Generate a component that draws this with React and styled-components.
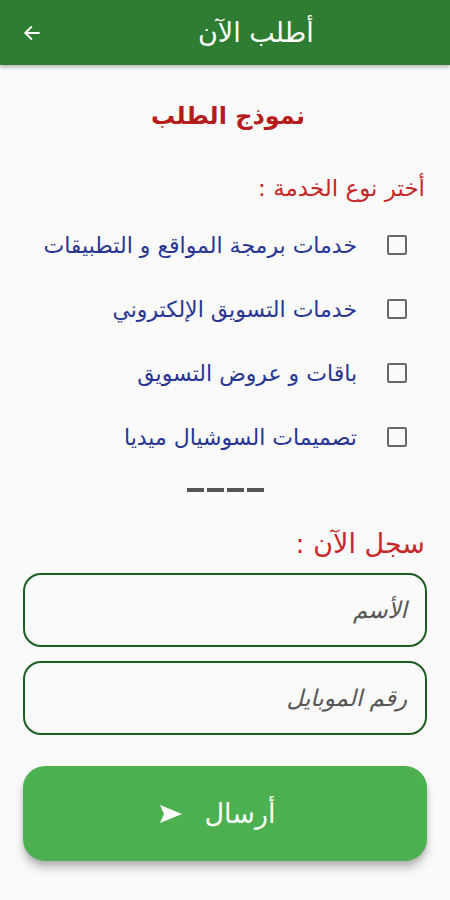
import styled, { createGlobalStyle } from "styled-components";

const GlobalStyle = createGlobalStyle`
  html, body {
    margin: 0;
    padding: 0;
    background: #fafafa;
    font-family: "DejaVu Sans", "Noto Sans", sans-serif;
  }
`;

const Page = styled.div`
  width: 450px;
  min-height: 900px;
  background: #fafafa;
  display: flex;
  flex-direction: column;
`;

const Header = styled.header`
  height: 65px;
  background: #2e7d32;
  box-shadow: 0 2px 4px rgba(0, 0, 0, 0.3);
  display: flex;
  align-items: center;
  padding: 0 0 0 20px;
  color: #fff;
`;

const BackButton = styled.div`
  width: 24px;
  height: 24px;
  display: flex;
  align-items: center;
  justify-content: center;
`;

const HeaderTitle = styled.h1`
  margin: 0 0 0 154px;
  font-size: 27px;
  font-weight: 400;
  direction: rtl;
`;

const Body = styled.main`
  direction: rtl;
  padding: 0 23px;
  display: flex;
  flex-direction: column;
`;

const FormTitle = styled.h2`
  margin: 37px 0 0 0;
  text-align: center;
  color: #b71c1c;
  font-size: 24px;
  font-weight: 700;
  padding-left: 6px;
`;

const SectionLabel = styled.div`
  color: #c62828;
  font-size: ${(p) => p.size}px;
  margin-top: ${(p) => p.top}px;
  padding-right: 2px;
`;

const List = styled.div`
  display: flex;
  flex-direction: column;
  margin-top: 12px;
`;

const Option = styled.label`
  height: 64px;
  display: flex;
  align-items: center;
  gap: 30px;
  padding-right: 20px;
  color: #283593;
  font-size: 22px;
`;

const Box = styled.span`
  width: 16px;
  height: 16px;
  border: 2px solid #666;
  border-radius: 2px;
  flex: none;
`;

const Divider = styled.div`
  align-self: center;
  display: flex;
  gap: 3px;
  margin-top: 19px;
`;

const Dash = styled.span`
  width: 17px;
  height: 4px;
  background: #555;
`;

const Field = styled.div`
  box-sizing: border-box;
  height: 74px;
  border: 2px solid #1b5e20;
  border-radius: 18px;
  display: flex;
  align-items: center;
  padding: 0 18px;
  color: #555;
  font-size: 23px;
  font-style: italic;
  margin-top: ${(p) => p.top}px;
`;

const SendButton = styled.button`
  margin-top: 31px;
  height: 95px;
  border: none;
  border-radius: 22px;
  background: #4caf50;
  color: #fff;
  font-family: inherit;
  font-size: 27px;
  display: flex;
  align-items: center;
  justify-content: center;
  gap: 22px;
  padding: 0 16px 0 0;
  box-shadow: 0 8px 10px rgba(0, 0, 0, 0.2), 0 3px 4px rgba(0, 0, 0, 0.12);
`;

const services = [
  "خدمات برمجة المواقع و التطبيقات",
  "خدمات التسويق الإلكتروني",
  "باقات و عروض التسويق",
  "تصميمات السوشيال ميديا",
];

const App = () => {
  return (
    <Page>
      <GlobalStyle />
      <Header>
        <BackButton>
          <svg width="20" height="20" viewBox="0 0 24 24" fill="none" stroke="#fff" strokeWidth="2.4" strokeLinecap="square">
            <path d="M20 12H5M11 5l-7 7 7 7" />
          </svg>
        </BackButton>
        <HeaderTitle>أطلب الآن</HeaderTitle>
      </Header>
      <Body>
        <FormTitle>نموذج الطلب</FormTitle>
        <SectionLabel top={45} size={23}>أختر نوع الخدمة :</SectionLabel>
        <List>
          {services.map((s) => (
            <Option key={s}>
              <Box />
              <span>{s}</span>
            </Option>
          ))}
        </List>
        <Divider>
          <Dash />
          <Dash />
          <Dash />
          <Dash />
        </Divider>
        <SectionLabel top={36} size={27}>سجل الآن :</SectionLabel>
        <Field top={14}>الأسم</Field>
        <Field top={14}>رقم الموبايل</Field>
        <SendButton>
          <span>أرسال</span>
          <svg width="24" height="22" viewBox="0 0 24 22" fill="#fff">
            <path d="M1 2l22 9-22 9 4-9z" />
          </svg>
        </SendButton>
      </Body>
    </Page>
  );
};

export default App;
